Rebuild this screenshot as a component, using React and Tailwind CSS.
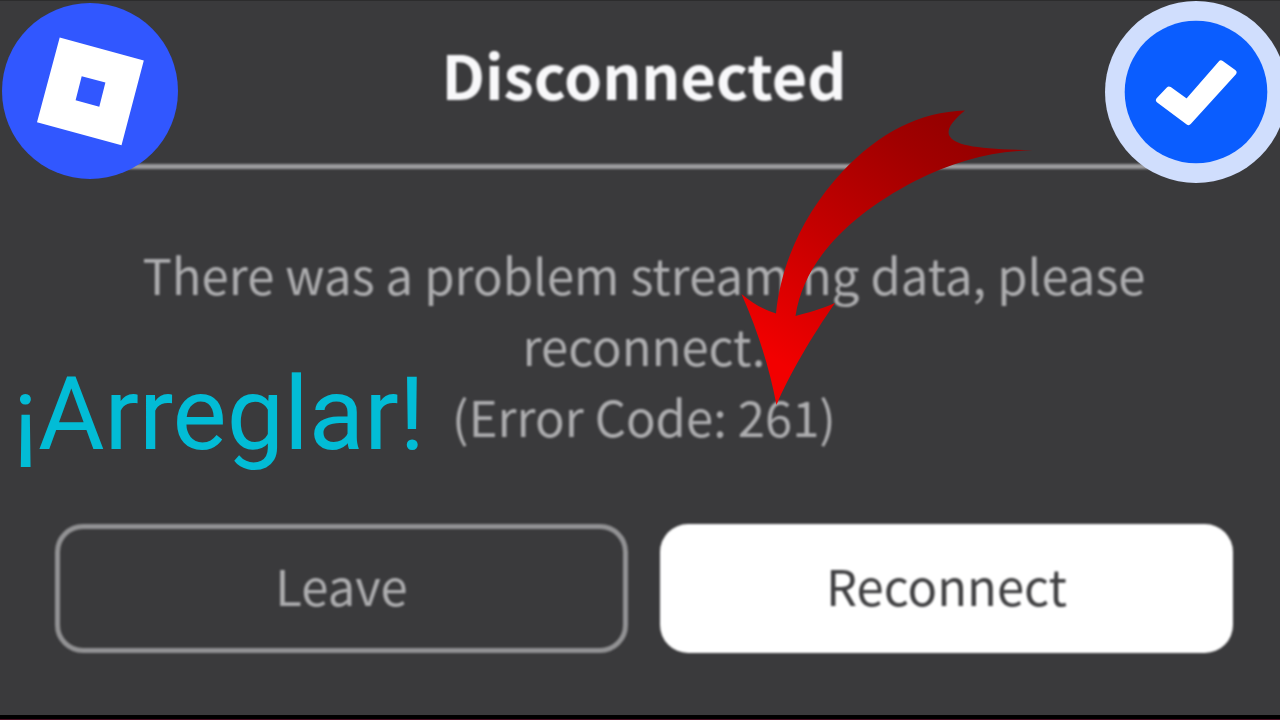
function BrandBadge() {
  return (
    <svg viewBox="0 0 176 176" className="absolute left-[2px] top-[2px] w-44 h-44" role="img" aria-label="Roblox">
      <circle cx="88" cy="88" r="88" fill="#3157ff" />
      <path
        fill="#ffffff"
        fillRule="evenodd"
        d="M57.7 34.5 L141.8 57.5 L119.5 142.3 L35 119.3 Z M79.7 73.3 L103.4 79.5 L97.3 103.7 L73.6 97.2 Z"
      />
    </svg>
  );
}

function VerifiedBadge() {
  return (
    <svg viewBox="0 0 182 182" className="absolute -right-[7px] top-0 w-[182px] h-[182px]" role="img" aria-label="Verified">
      <circle cx="91" cy="91" r="91" fill="#d0defd" />
      <circle cx="91" cy="91" r="71.3" fill="#0a5dff" />
      <path
        d="M54 99 L64 88.5 L82 101.5 L116 62.5 L128.5 71.5 L83.5 121 Z"
        fill="#ffffff"
        stroke="#ffffff"
        strokeWidth="6"
        strokeLinejoin="round"
      />
    </svg>
  );
}

function CurvedArrow() {
  return (
    <svg viewBox="740 105 300 305" className="absolute left-[740px] top-[104px] w-[300px] h-[305px]" aria-hidden="true">
      <defs>
        <linearGradient id="arrowRed" gradientUnits="userSpaceOnUse" x1="960" y1="130" x2="790" y2="370">
          <stop offset="0" stopColor="#960000" />
          <stop offset="0.15" stopColor="#a00000" />
          <stop offset="0.55" stopColor="#c40000" />
          <stop offset="1" stopColor="#f20000" />
        </linearGradient>
      </defs>
      <path
        fill="url(#arrowRed)"
        d="M965 110.5 C952 121 947 129 949 135 C954 146 978 149 1033 150.3 C992 151 955 161 915 181 C848 216 804 261 795.5 316 C807 313 821 309 835 303 C812 336 789 375 776.5 405 C770 370 758 331 741.5 294 C753 304 765 310 776 313.5 C781 262 805 212 842 172 C880 132 920 112 965 110.5 Z"
      />
    </svg>
  );
}

export default function App() {
  return (
    <main className="relative min-h-screen overflow-hidden flex flex-col bg-[#3a3a3c] border-t border-[#2c2c2d] font-['Noto_Sans_CJK_SC','Noto_Sans',sans-serif]">
      <section className="flex-1 flex flex-col pl-[55px] pr-[47px]" aria-labelledby="dialog-title">
        <h1 id="dialog-title" className="pt-7 h-[163px] text-center text-[61px] leading-[90px] font-bold text-[#f8f8fa] blur-[1px]">
          Disconnected
        </h1>
        <hr className="h-[5px] border-0 bg-[#9b9b9d] blur-[1px]" />
        <p className="mt-[69px] mx-auto max-w-[1040px] text-center text-[49px] leading-[71px] text-[#adadaf] blur-[1px]">
          There was a problem streaming data, please reconnect.
          <br />
          (Error Code: 261)
        </p>
        <div className="mt-[73px] grid grid-cols-2 gap-8">
          <button type="button" className="h-[129px] pb-2 rounded-[28px] border-[5px] border-[#929294] text-[49px] text-[#adadaf] blur-[1px]">
            Leave
          </button>
          <button type="button" className="h-[129px] pb-2 rounded-[28px] bg-white text-[49px] text-[#404042] blur-[1px]">
            Reconnect
          </button>
        </div>
      </section>
      <div className="h-[5px] bg-black border-b border-[#4a0c22]" />

      <BrandBadge />
      <VerifiedBadge />
      <strong className="absolute left-[13px] top-[353px] font-['Roboto',sans-serif] font-normal text-[102px] leading-[120px] text-[#02bcd6]">
        ¡Arreglar!
      </strong>
      <CurvedArrow />
    </main>
  );
}
